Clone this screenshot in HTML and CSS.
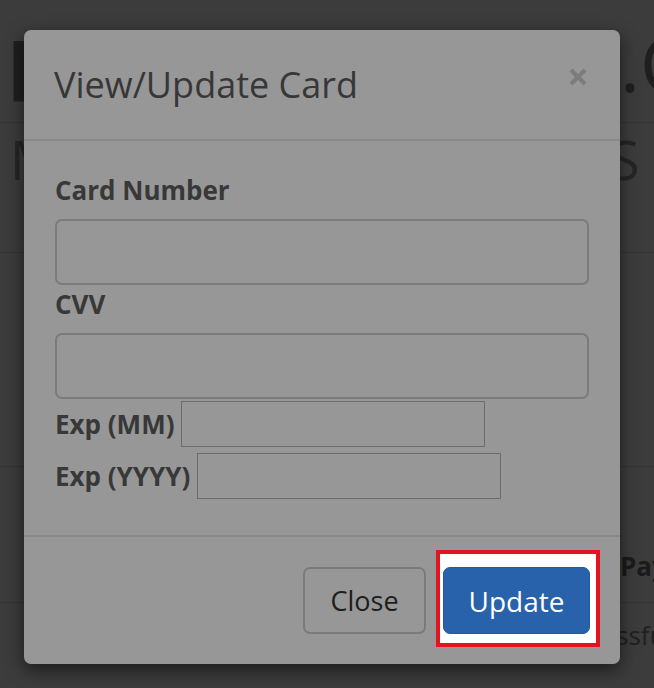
FILE: index.html
```html
<!DOCTYPE html>
<html lang="en">
<head>
<meta charset="utf-8">
<title>View/Update Card</title>
<link rel="stylesheet" href="styles.css">
</head>
<body>
<div class="page">
  <div class="row row-head">
    <span class="big-left">P</span>
    <span class="big-right">.C</span>
  </div>
  <div class="row row-sub">
    <span class="sub-left">M</span>
    <span class="sub-right">S</span>
  </div>
  <div class="row row-empty"></div>
  <div class="row row-th">
    <span></span>
    <span class="th-right">Pay</span>
  </div>
  <div class="row row-td">
    <span></span>
    <span class="td-right">ssful</span>
  </div>
</div>

<div class="modal">
  <div class="modal-header">
    <h4 class="modal-title">View/Update Card</h4>
    <button class="close-x" type="button" aria-label="Close">
      <svg width="20" height="20" viewBox="0 0 20 20"><path d="M3 3 L17 17 M17 3 L3 17" stroke="currentColor" stroke-width="4.2" stroke-linecap="butt"/></svg>
    </button>
  </div>
  <div class="modal-body">
    <label class="lbl">Card Number</label>
    <div class="field-lg"></div>
    <label class="lbl lbl-cvv">CVV</label>
    <div class="field-lg"></div>
    <div class="exp-row exp-mm">
      <label class="lbl-inline">Exp (MM)</label>
      <div class="field-sm"></div>
    </div>
    <div class="exp-row exp-yy">
      <label class="lbl-inline">Exp (YYYY)</label>
      <div class="field-sm"></div>
    </div>
  </div>
  <div class="modal-footer">
    <button class="btn btn-default" type="button">Close</button>
    <span class="highlight">
      <button class="btn btn-primary" type="button">Update</button>
    </span>
  </div>
</div>
</body>
</html>
```

FILE: styles.css
```css
html, body {
  margin: 0;
  padding: 0;
}
body {
  width: 654px;
  height: 688px;
  overflow: hidden;
  background: #3c3c3c;
  font-family: "Open Sans", "Noto Sans", sans-serif;
  position: relative;
}

/* background page (dimmed) */
.page {
  width: 654px;
}
.row {
  display: grid;
  grid-template-columns: 1fr 34px;
  border-bottom: 1px solid #343434;
  box-sizing: border-box;
  white-space: nowrap;
  color: #1f1f1f;
}
.row-head { height: 123px; align-items: center; }
.big-left {
  font-size: 84px;
  font-weight: 700;
  padding-left: 6px;
  line-height: 1;
  margin-top: 16px;
}
.big-right {
  font-size: 76px;
  font-weight: 400;
  line-height: 1;
  margin-top: 4px;
}
.row-sub { height: 130px; align-items: start; padding-top: 4px; }
.sub-left {
  font-size: 54px;
  line-height: 1.2;
  padding-left: 10px;
  color: #252525;
}
.sub-right {
  font-size: 54px;
  line-height: 1.2;
  margin-left: -10px;
  color: #252525;
}
.row-empty { height: 214px; }
.row-th { height: 136px; align-items: end; padding-bottom: 18px; }
.th-right {
  font-size: 26px;
  font-weight: 700;
  color: #1b1b1b;
}
.row-td { height: 85px; border-bottom: none; padding-top: 14px; }
.td-right {
  font-size: 26px;
  color: #202020;
  margin-left: -4px;
}

/* modal */
.modal {
  position: absolute;
  left: 24px;
  top: 30px;
  width: 596px;
  height: 634px;
  background: #979797;
  border-radius: 7px;
  box-shadow: 0 6px 18px rgba(0, 0, 0, 0.55);
  display: flex;
  flex-direction: column;
  color: #383838;
}
.modal-header {
  height: 111px;
  box-sizing: border-box;
  border-bottom: 2px solid #898989;
  display: flex;
  align-items: flex-start;
  justify-content: space-between;
  padding: 0 31px 0 30px;
}
.modal-title {
  margin: 0;
  margin-top: 31px;
  font-size: 36px;
  font-weight: 400;
  line-height: 48px;
  color: #373737;
}
.close-x {
  border: 0;
  background: none;
  padding: 0;
  margin-top: 37px;
  margin-right: 1px;
  color: #7c7c7c;
  display: flex;
}

.modal-body {
  padding: 33px 31px 0 31px;
  height: 394px;
  box-sizing: border-box;
  display: flex;
  flex-direction: column;
}
.lbl {
  font-size: 26px;
  font-weight: 700;
  line-height: 32px;
  color: #383838;
  margin-bottom: 13px;
}
.lbl-cvv {
  margin-top: 3px;
}
.field-lg {
  height: 66px;
  box-sizing: border-box;
  border: 2px solid #7b7b7b;
  border-radius: 7px;
}
.exp-row {
  display: flex;
  align-items: center;
  gap: 7px;
}
.exp-mm { margin-top: 2px; }
.exp-yy { margin-top: 6px; }
.lbl-inline {
  font-size: 26px;
  font-weight: 700;
  line-height: 32px;
  color: #383838;
}
.field-sm {
  width: 304px;
  height: 46px;
  box-sizing: border-box;
  border: 1px solid #6c6c6c;
}

.modal-footer {
  flex: 1;
  border-top: 2px solid #898989;
  display: flex;
  justify-content: flex-end;
  align-items: flex-start;
  padding: 30px 30px 0 0;
  gap: 17px;
}
.btn {
  font-family: "Open Sans", "Noto Sans", sans-serif;
  font-size: 27px;
  height: 67px;
  border-radius: 7px;
  box-sizing: border-box;
  cursor: pointer;
}
.btn-default {
  width: 123px;
  background: transparent;
  border: 2px solid #7b7b7b;
  color: #1e1e1e;
}
.highlight {
  position: relative;
  z-index: 0;
  display: flex;
}
.highlight::before {
  content: "";
  position: absolute;
  left: -7px;
  right: -10px;
  top: -17px;
  bottom: -13px;
  background: #ffffff;
  border: 4px solid #e3141f;
  z-index: -1;
}
.btn-primary {
  width: 147px;
  background: #2862ab;
  border: 1px solid #24599c;
  color: #ffffff;
  font-size: 28px;
}
```
